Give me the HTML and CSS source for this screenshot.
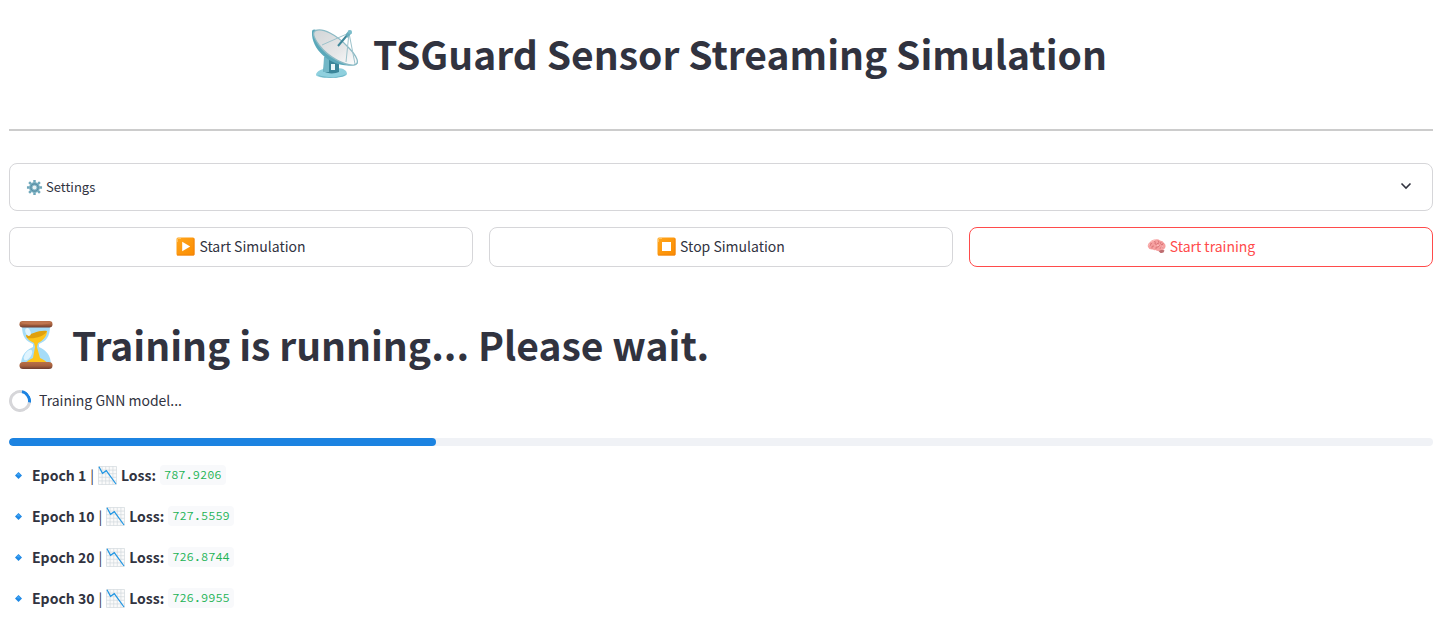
FILE: index.html
```
<!DOCTYPE html>
<html lang="en">
<head>
<meta charset="utf-8">
<meta name="viewport" content="width=device-width, initial-scale=1">
<title>TSGuard Sensor Streaming Simulation</title>
<link rel="stylesheet" href="styles.css">
</head>
<body>
<svg class="defs" width="0" height="0" aria-hidden="true">
  <defs>
    <linearGradient id="orange" x1="0" y1="0" x2="1" y2="1"><stop offset="0" stop-color="#ffa51c"/><stop offset="1" stop-color="#fb8c00"/></linearGradient>
    <linearGradient id="dish" x1="0" y1="0" x2="1" y2="1"><stop offset="0" stop-color="#d2d5d7"/><stop offset=".6" stop-color="#e6e7e8"/><stop offset="1" stop-color="#fff"/></linearGradient>
    <linearGradient id="wood" x1="0" y1="0" x2="0" y2="1"><stop offset="0" stop-color="#b97048"/><stop offset=".55" stop-color="#a6603d"/><stop offset="1" stop-color="#6d3d31"/></linearGradient>
    <symbol id="diamond" viewBox="0 0 19 19"><path d="M9.500 6 13 9.500 9.500 13 6 9.500Z" fill="#1e88e5"/><path d="M9.500 7 11.500 9.500 9.500 9.500 7.500 9Z" fill="#42a5f5"/></symbol>
    <symbol id="chart" viewBox="0 0 19 19">
      <rect x=".5" y=".5" width="18" height="18" fill="#fafafa"/>
      <path d="M.5 .5V18.500H18.500V.5ZM4.100 .5V18.500M7.700 .5V18.500M11.300 .5V18.500M14.900 .5V18.500M.5 4.100H18.500M.5 7.700H18.500M.5 11.300H18.500M.5 14.900H18.500" fill="none" stroke="#d3dade" stroke-width=".7"/>
      <path d="M1 .8 4.500 7.300 8.300 4.700 18 18" fill="none" stroke="#2196e3" stroke-width="1.250"/>
    </symbol>
  </defs>
</svg>

<main class="page">
  <header class="masthead">
    <h1 class="title">
      <svg class="emoji-lg" viewBox="0 0 52 52" aria-hidden="true">
        <path d="M6 47C6 43 13 40 20 40H27C34 40 37 43 37 46C36 51 7 51 6 47Z" fill="#8fd0de"/>
        <path d="M8 47C17 50 29 50 36 46C34 51 10 51 8 47Z" fill="#6db5c6"/>
        <path d="M17 27 13 43C17 46 25 46 29 44V32Z" fill="#3a8599"/>
        <path d="M14 29 19 28 19 44H13Z" fill="#72b7c7"/>
        <path d="M21 36H25V42H21Z" fill="#e8f6f9"/>
        <path d="M2 4C1 23 24 41 44 37C48 36 49 35 46 31L7 2C4 1 2 1 2 4Z" fill="#5aa8ba"/>
        <path d="M5 3C12-1 27 7 38 19C48 29 50 36 44 37C35 38 18 29 9 17C4 10 2 5 5 3Z" fill="url(#dish)" stroke="#8bbac5" stroke-width="1.300"/>
        <path d="M12 17 39 5 36 34M39 5 45 36" fill="none" stroke="#9cc2cb" stroke-width="1"/>
        <path d="M28 18 39 5" stroke="#3f879a" stroke-width="2"/>
        <path d="M36 6 39 2 42 5 37 10Z" fill="#68adbd"/>
        <circle cx="40" cy="4" r="2" fill="#7bbdcb"/>
      </svg>
      <span class="title-text">TSGuard Sensor Streaming Simulation</span>
    </h1>
  </header>
  <hr class="rule">

  <button class="settings" type="button" aria-expanded="false">
    <svg class="emoji-sm" viewBox="0 0 18 18" aria-hidden="true">
      <g stroke="#6fa7ba" stroke-width="2.600"><path d="M9 1V17M1 9H17M3.300 3.300 14.700 14.700M14.700 3.300 3.300 14.700"/></g>
      <circle cx="9" cy="9" r="5.700" fill="#7fb3c4"/>
      <circle cx="9" cy="9" r="3.900" fill="none" stroke="#578da3" stroke-width="1.200"/>
      <circle cx="9" cy="9" r="2.100" fill="#e9f2f5"/>
    </svg>
    <span>Settings</span>
    <svg class="chevron" viewBox="0 0 16 16" aria-hidden="true"><path d="M3.500 4.500 8 9 12.500 4.500" fill="none" stroke="#31333f" stroke-width="1.600"/></svg>
  </button>

  <div class="actions">
    <button class="action" type="button">
      <svg class="emoji" viewBox="0 0 19 19" aria-hidden="true"><rect x=".5" y=".5" width="18" height="18" rx="1.500" fill="url(#orange)"/><path d="M1.500 5V2Q1.500 1.500 2 1.500H5" fill="none" stroke="#ffc15d"/><path d="M1 18H18V1.500" fill="none" stroke="#ef7f0b" stroke-width=".8"/><path d="M6.200 4.800 14.200 9.500 6.200 14.200Z" fill="#fff"/></svg>
      <span>Start Simulation</span>
    </button>
    <button class="action" type="button">
      <svg class="emoji" viewBox="0 0 19 19" aria-hidden="true"><rect x=".5" y=".5" width="18" height="18" rx="1.500" fill="url(#orange)"/><path d="M1.500 5V2Q1.500 1.500 2 1.500H5" fill="none" stroke="#ffc15d"/><path d="M1 18H18V1.500" fill="none" stroke="#ef7f0b" stroke-width=".8"/><rect x="5" y="5" width="9" height="9" fill="#fff"/></svg>
      <span>Stop Simulation</span>
    </button>
    <button class="action action-active" type="button">
      <svg class="emoji" viewBox="0 0 19 19" aria-hidden="true">
        <path d="M14 12 17.500 13.500Q17 16.500 13.500 16L10.500 13Z" fill="#bd6d70"/>
        <path d="M1 10Q0 7 3 5Q5 2 8 2.500Q11 1.500 13 3.500Q16 3.500 17 6Q19.500 8 18 11Q17 13.500 14 13Q11 15 8.500 13Q7 13.500 6 12.500Q2 13 1 10Z" fill="#f6a0a0"/>
        <path d="M3 9Q2.500 6.500 5 6.500M5 11.500Q4 8.500 7 9M7 4Q9 4 8 7Q10 8 11 6M11 3.500Q13 5 11 7M9 12Q8 9.500 11 10Q13 9 12 8M14 5Q12.500 7 15 8Q16.500 7 16 6M13 12Q13 10 16 10" fill="none" stroke="#d87376" stroke-width=".9"/>
        <path d="M4 5Q6 3 8 3.500M2 9Q1.500 7 3 7M10 8.500H12M14 11.500 16 9" fill="none" stroke="#ffc9c6" stroke-width=".7"/>
      </svg>
      <span>Start training</span>
    </button>
  </div>

  <section class="training">
    <h2 class="title">
      <svg class="emoji-lg" viewBox="-1 0 52 52" aria-hidden="true">
        <path d="M12 7H40C40 18 36 22 29 25V28C36 31 41 36 41 46H11C11 36 16 31 23 28V25C16 22 12 18 12 7Z" fill="#a5dcf8"/>
        <path d="M16 17C24 15 27 12 37 12C37 18 32 22 28 24L27 28L30 39C34 41 38 43 38 46H15C15 43 19 41 23 39L25 28L24 24C20 22 17 20 16 17Z" fill="#fdc41b"/>
        <path d="M16 16C24 15 28 11 37 12C34 18 24 20 17 19Z" fill="#dfa00d"/>
        <ellipse cx="18" cy="13" rx="2.500" ry="4" fill="#dff4ff" transform="rotate(-20 18 13)"/>
        <ellipse cx="18" cy="36" rx="3" ry="6" fill="#dff4ff" transform="rotate(35 18 36)"/>
        <rect x="9.500" y="2" width="33" height="6.500" rx="3.200" fill="url(#wood)"/>
        <ellipse cx="26" cy="3.800" rx="15" ry="1.800" fill="#bf7650"/>
        <rect x="9.500" y="43" width="33" height="7" rx="3.500" fill="url(#wood)"/>
      </svg>
      <span class="title-text">Training is running... Please wait.</span>
    </h2>
    <div class="status" role="status"><span class="spinner"></span><span class="status-text">Training GNN model...</span></div>
    <div class="track" role="progressbar" aria-label="Training progress" aria-valuemin="0" aria-valuemax="100" aria-valuenow="30"><div class="fill" style="width:30%"></div></div>
    <ul class="log">
      <li class="entry"><svg class="emoji" aria-hidden="true"><use href="#diamond"/></svg><strong>Epoch 1</strong><span>|</span><svg class="emoji" aria-hidden="true"><use href="#chart"/></svg><strong>Loss:</strong><code class="value">787.9206</code></li>
      <li class="entry"><svg class="emoji" aria-hidden="true"><use href="#diamond"/></svg><strong>Epoch 10</strong><span>|</span><svg class="emoji" aria-hidden="true"><use href="#chart"/></svg><strong>Loss:</strong><code class="value">727.5559</code></li>
      <li class="entry"><svg class="emoji" aria-hidden="true"><use href="#diamond"/></svg><strong>Epoch 20</strong><span>|</span><svg class="emoji" aria-hidden="true"><use href="#chart"/></svg><strong>Loss:</strong><code class="value">726.8744</code></li>
      <li class="entry"><svg class="emoji" aria-hidden="true"><use href="#diamond"/></svg><strong>Epoch 30</strong><span>|</span><svg class="emoji" aria-hidden="true"><use href="#chart"/></svg><strong>Loss:</strong><code class="value">726.9955</code></li>
    </ul>
  </section>
</main>
</body>
</html>
```
FILE: styles.css
```
* { box-sizing: border-box; }
body {
  margin: 0;
  background: #fff;
  color: #31333f;
  font-family: "Source Sans Pro", "Noto Sans CJK SC", sans-serif;
  font-size: 14px;
  line-height: 24px;
}
.defs { position: absolute; }
.page { padding: 28px 3px 24px 9px; }
.masthead { display: flex; justify-content: center; padding-right: 25px; }
.title {
  display: flex;
  align-items: center;
  gap: 11px;
  margin: 0;
  font-size: 39px;
  font-weight: 700;
  line-height: 48px;
}
.title-text { padding-bottom: 3px; }
.emoji-lg { width: 52px; height: 52px; flex: none; }
.emoji { width: 19px; height: 19px; flex: none; }
.emoji-sm { width: 17px; height: 17px; flex: none; }
.rule { margin: 49px 0 32px; border: 0; border-top: 2px solid #ccc; }
.settings {
  display: flex;
  align-items: center;
  gap: 3px;
  width: 100%;
  height: 48px;
  padding: 0 18px 0 16px;
  border: 1px solid #d6d6d9;
  border-radius: 8px;
  background: #fff;
  color: inherit;
  font: inherit;
  font-size: 13px;
}
.chevron { width: 16px; height: 16px; margin-left: auto; }
.actions { display: grid; grid-template-columns: repeat(3, 1fr); gap: 16px; margin-top: 16px; }
.action {
  display: flex;
  align-items: center;
  justify-content: center;
  gap: 4px;
  height: 40px;
  padding: 0 6px 2px;
  border: 1px solid #d6d6d9;
  border-radius: 8px;
  background: #fff;
  color: inherit;
  font: inherit;
}
.action-active { border-color: #ff4b4b; color: #ff4b4b; }
.training { margin-top: 52px; }
.status { display: flex; align-items: center; gap: 8px; height: 24px; margin-top: 18px; }
.status-text { padding-bottom: 2px; }
.spinner {
  width: 22px;
  height: 22px;
  border: 3px solid #d6d6d9;
  border-top-color: #1c83e1;
  border-radius: 50%;
  transform: rotate(55deg);
}
.track { height: 8px; margin-top: 25px; border-radius: 4px; background: #f0f2f6; overflow: hidden; }
.fill { height: 100%; border-radius: 4px; background: #1c83e1; }
.log { display: grid; gap: 17px; margin: 17px 0 0; padding: 0; list-style: none; }
.entry { display: flex; align-items: center; gap: 4px; }
.value {
  padding: 0 4px;
  border-radius: 4px;
  background: #f8f9fb;
  color: #21b354;
  font-family: "Source Code Pro", "DejaVu Sans Mono", monospace;
  font-size: 12px;
  line-height: 20px;
}
```
